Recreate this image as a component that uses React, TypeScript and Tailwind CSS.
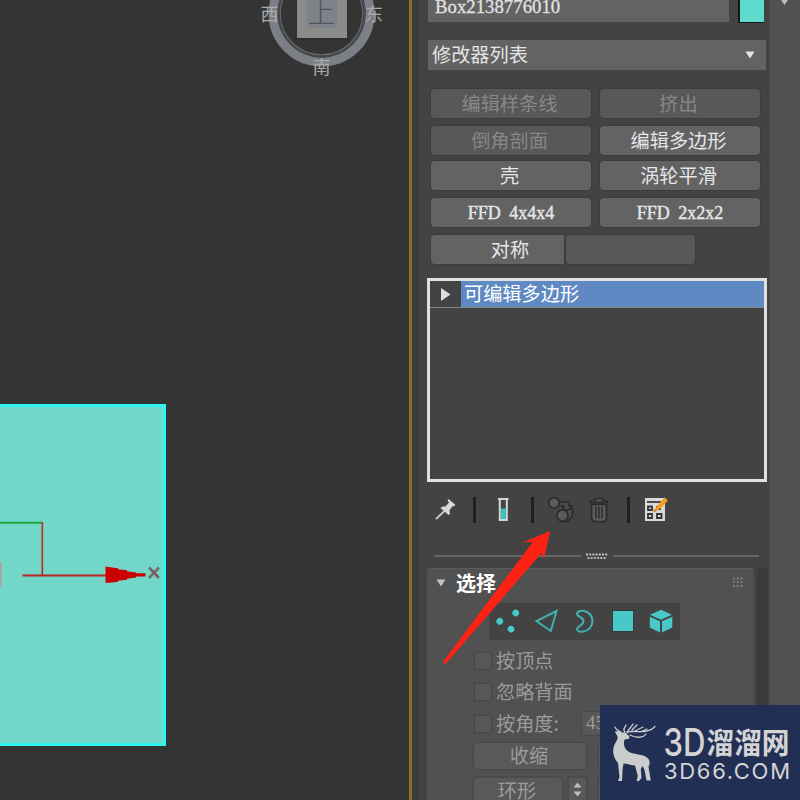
import React from "react";

const cjk = "font-['Noto_Sans_CJK_SC',sans-serif]";

function Viewport() {
  return (
    <section className="relative h-full w-[409px] shrink-0 overflow-hidden bg-[#343434]">
      <svg className="absolute left-[250px] top-0" width="140" height="86" viewBox="250 0 140 86">
        <circle cx="321.5" cy="13.5" r="48.5" fill="none" stroke="#7c8086" strokeWidth="9" />
        <circle cx="321.5" cy="13.5" r="43.2" fill="none" stroke="#46494d" strokeWidth="2" />
        <circle cx="321.5" cy="13.5" r="41.3" fill="none" stroke="#686b6e" strokeWidth="1.2" />
        <rect x="295" y="-12" width="54" height="52" fill="#2f2f2f" opacity="0.6" />
        <rect x="297" y="-12" width="50" height="50" fill="#8b8b8a" />
        <rect x="307" y="-5" width="30" height="33" fill="#7e8289" />
        <g className={cjk} textAnchor="middle">
          <text x="321.5" y="23" fontSize="28" fontWeight="300" fill="#50545b">上</text>
          <g fontSize="18" fontWeight="400" fill="#a9abad">
            <text x="269.5" y="21">西</text>
            <text x="374" y="21">东</text>
            <text x="321.5" y="74">南</text>
          </g>
        </g>
      </svg>
      <div className="absolute -left-3 top-[404px] h-[342px] w-[178px] border-[3px] border-[#2df5f3] bg-[#72d7c9]" />
      <svg className="absolute left-0 top-[510px]" width="170" height="86" viewBox="0 510 170 86">
        <rect x="0" y="562" width="1.5" height="25" fill="#b39c9c" />
        <path d="M0 522.8H42" stroke="#20a83a" strokeWidth="2" />
        <path d="M42.3 522V575" stroke="#bd3030" strokeWidth="1.7" />
        <path d="M22.500 575.500H108" stroke="#b72525" strokeWidth="2" />
        <path d="M105.500 566.500L110 567.200L118 568.200V569.300L127 570.300V571.300L136 572.500V573.300H145.500V576.500H136V577.500L127 578.700V579.700L118 580.700V581.700L110 582.800H105.500Z" fill="#cb0000" />
        <path d="M149 567.500L159 578M159 567.500L149 578" stroke="#756f69" strokeWidth="2.600" />
        <path d="M150 568L158 577" stroke="#91423e" strokeWidth="1" />
      </svg>
    </section>
  );
}

function ModButton({ label, disabled = false, latin = false }: { label: string; disabled?: boolean; latin?: boolean }) {
  return (
    <button
      className={`flex h-[29px] w-[160px] items-center justify-center rounded-[4px] shadow-[0_0_0_1px_#3c3c3c] ${
        disabled ? "bg-[#585858] text-[#878787]" : "bg-[#636363] text-[#e6e6e6]"
      }`}
    >
      <span
        className={
          latin
            ? "font-['Liberation_Serif',serif] text-[18px] leading-none [-webkit-text-stroke:0.4px_#e6e6e6] [word-spacing:4px]"
            : "-ml-[3px] text-[19.200px] leading-none"
        }
      >
        {label}
      </span>
    </button>
  );
}

function Separator() {
  return <div className="h-[26px] w-[3px] bg-[#1f1f1f]" />;
}

function StackToolbar() {
  return (
    <div className="mt-[14px] flex h-[28px] items-center pl-[7px]">
      <svg width="24" height="26" viewBox="434 497 24 26">
        <path d="M436.500 518.500L445 510.500" stroke="#c4c4c4" strokeWidth="2" strokeLinecap="round" />
        <path d="M448.500 499L455.500 505L453.500 506.500L452.500 506L449.500 510.500L450 513.500L448.500 515L440.500 508L442.500 506.500L445.500 506.500L449 502.500L447.500 500.500Z" fill="#dadada" />
      </svg>
      <div className="ml-[15px]"><Separator /></div>
      <svg className="ml-[20px]" width="14" height="26" viewBox="496 497 14 26">
        <path d="M498 499H508.500M499.800 499V520H506.800V499" fill="none" stroke="#d6d6d6" strokeWidth="2" />
        <rect x="500.800" y="508.500" width="5" height="10.500" fill="#39c2c2" />
      </svg>
      <div className="ml-[21px]"><Separator /></div>
      <svg className="ml-[13px]" width="28" height="28" viewBox="547 496 28 28">
        <circle cx="554" cy="502.800" r="5.200" fill="#5b5b5b" stroke="#2b2b2b" strokeWidth="1.700" />
        <path d="M560 502H568.500V506H572L567 512L562 506H565" fill="#4e4e4e" stroke="#2b2b2b" strokeWidth="1.600" />
        <path d="M566 510.500L572.500 508.500V516L567.500 521.500H560" fill="#4e4e4e" stroke="#2b2b2b" strokeWidth="1.600" />
        <circle cx="562.500" cy="515.500" r="5.600" fill="#5b5b5b" stroke="#2b2b2b" strokeWidth="1.700" />
      </svg>
      <svg className="ml-[14px]" width="20" height="26" viewBox="589 497 20 26">
        <path d="M590 502.500H608L606 500.500H602.500V498.500H595.500V500.500H592Z" fill="#535353" stroke="#2b2b2b" strokeWidth="1.500" />
        <path d="M591.500 504.500H606.500V519L604.500 521.500H593.500L591.500 519Z" fill="#5b5b5b" stroke="#2b2b2b" strokeWidth="1.700" />
        <path d="M596 506.500V518.500M599 506.500V518.500M602 506.500V518.500" stroke="#2b2b2b" strokeWidth="1.400" />
      </svg>
      <div className="ml-[18px]"><Separator /></div>
      <svg className="ml-[14px]" width="25" height="26" viewBox="644 497 25 26">
        <path d="M645 498H665V521H645Z" fill="#d9d9d9" />
        <path d="M647 502H661" stroke="#3e3e3e" strokeWidth="1.800" />
        <path d="M648 506.500H652V510H648ZM648 514H652V518H648ZM657 514H661.500V518H657Z" fill="#d9d9d9" stroke="#333" strokeWidth="1.800" />
        <path d="M656 506H661V510H656Z" fill="#333" />
        <path d="M654 511.500L656.500 506.500L664.500 497.500L668 500.500L660 509Z" fill="#f1a21d" />
        <path d="M653 512.500L654.500 509L657 511Z" fill="#d58608" />
      </svg>
    </div>
  );
}

function Divider() {
  return (
    <div className="mt-[27px] flex h-[10px] items-center pl-[7px]">
      <div className="h-[2px] w-[147px] bg-[#666]" />
      <svg className="ml-[4px]" width="24" height="10" viewBox="585 551 24 10">
        <path d="M586 554.500H608" stroke="#c4c4c4" strokeWidth="2" strokeDasharray="2 1.200" />
        <path d="M587.500 558H607" stroke="#b4b4b4" strokeWidth="2" strokeDasharray="2 1.200" />
      </svg>
      <div className="ml-[4px] h-[2px] w-[146px] bg-[#666]" />
    </div>
  );
}

function SubObjectBar() {
  return (
    <svg className="ml-[62px] mt-[5px] block bg-[#434343]" width="191" height="37" viewBox="489 603 191 37">
      <g fill="#49c8c8" stroke="#353b3b" strokeWidth="1">
        <path d="M498.500 617.300H501L503.700 620V622.500L501 625.200H498.500L495.800 622.500V620Z" />
        <path d="M514.500 609H517L519.700 611.700V614.200L517 616.900H514.500L511.800 614.200V611.700Z" />
        <path d="M509.800 625.200H512.300L515 627.900V630.400L512.300 633.100H509.800L507.100 630.400V627.900Z" />
        <rect x="612.500" y="610.500" width="21" height="21" />
      </g>
      <path d="M536.500 621.200L556.500 611L550.800 631Z" fill="none" stroke="#43b1b1" strokeWidth="2" />
      <path d="M577 613.500C578 610.500 581 610.500 584 611C589 612 592.500 616 592.500 621C592.500 626.500 588.500 631 583 631.500C580 632 577 631.500 577 629C577 625.500 583.500 626 583.500 621C583.500 616.500 577 617.500 577 613.500Z" fill="none" stroke="#43b1b1" strokeWidth="2" />
      <g fill="#49c8c8">
        <path d="M661 609.800L672 614.700L661 619.800L650 614.700Z" />
        <path d="M649.800 616.700L660 621.200V632.500L649.800 627.500Z" />
        <path d="M672.300 616.700L662 621.200V632.500L672.300 627.500Z" />
      </g>
    </svg>
  );
}

function CheckRow({ label }: { label: string }) {
  return (
    <div className="flex h-[20px] items-center">
      <div className="h-[18px] w-[18px] border border-[#474747] bg-[#575757]" />
      <span className="ml-[4px] text-[19.200px] leading-none text-[#9b9b9b]">{label}</span>
    </div>
  );
}

function SelectionRollout() {
  return (
    <div className="h-[232px] w-[327px] overflow-hidden rounded-t-[4px] border-t border-[#5b5b5b] bg-[#515151]">
      <div className="flex h-[29px] items-center pb-[2px] pl-[9px]">
        <svg width="10" height="8" viewBox="0 0 10 8"><path d="M0.500 0.500H9.500L5 7.500Z" fill="#c2c2c2" /></svg>
        <span className="ml-[10px] text-[20px] font-bold leading-none text-white">选择</span>
        <svg className="ml-[236px]" width="11" height="11" viewBox="0 0 11 11">
          <path d="M1 1.500H11M1 5.200H11M1 9H11" stroke="#858585" strokeWidth="1.800" strokeDasharray="1.800 2" />
        </svg>
      </div>
      <SubObjectBar />
      <div className="ml-[47px] mt-[11px]">
        <CheckRow label="按顶点" />
        <div className="mt-[11px]"><CheckRow label="忽略背面" /></div>
        <div className="mt-[9px] flex items-center">
          <CheckRow label="按角度:" />
          <div className="ml-[22px] flex h-[25px] w-[90px] items-center border border-[#474747] bg-[#575757] pl-[4px] font-['Liberation_Serif',serif] text-[19px] text-[#9b9b9b]">45.0</div>
        </div>
        <div className="mt-[7px] flex gap-[13px]">
          <div className="flex h-[26px] w-[112px] items-center justify-center rounded-[4px] bg-[#595959] pr-[2px] text-[19.200px] leading-none text-[#9b9b9b] shadow-[0_0_0_1.500px_#494949]">收缩</div>
          <div className="h-[26px] w-[112px] rounded-[4px] bg-[#595959] shadow-[0_0_0_1.500px_#494949]" />
        </div>
        <div className="mt-[9px] flex">
          <div className="flex h-[26px] w-[88px] items-center justify-center rounded-[4px] bg-[#595959] pr-[2px] text-[19.200px] leading-none text-[#9b9b9b] shadow-[0_0_0_1.500px_#494949]">环形</div>
          <svg className="ml-[7px] bg-[#595959] shadow-[0_0_0_1.500px_#494949]" width="17" height="26" viewBox="0 0 17 26">
            <path d="M4.500 9.500H12.500L8.500 4.500ZM4.500 13.500H12.500L8.500 18.500Z" fill="#bdbdbd" />
          </svg>
          <div className="ml-[13px] h-[26px] w-[88px] bg-[#595959] shadow-[0_0_0_1.500px_#494949]" />
        </div>
      </div>
    </div>
  );
}

function CommandPanel() {
  return (
    <aside className="h-full w-[357px] shrink-0 border-l-[7px] border-[#3c3c3c] bg-[#434343] pl-[9px]">
      <div className="flex h-[23px] gap-[9px]">
        <div className="flex h-[22px] w-[301px] items-start bg-[#636363] pl-[7px] font-['Liberation_Serif',serif] text-[18.800px] leading-[14px] text-[#e1e1e1] [-webkit-text-stroke:0.300px_#e1e1e1]">Box2138776010</div>
        <div className="h-[23px] w-[26px] border-b border-l-2 border-[#151515] bg-[#5ddccb]" />
      </div>
      <div className="mt-[17px] flex h-[30px] w-[338px] items-center justify-between bg-[#636363] pl-[4px] pr-[11px] text-[#e4e4e4]">
        <span className="text-[19.200px] leading-none">修改器列表</span>
        <svg width="10" height="8" viewBox="0 0 10 8"><path d="M0.500 0.500H9.500L5 7.500Z" fill="#e6e6e6" /></svg>
      </div>
      <div className="ml-[3px] mt-[19px] flex flex-col">
        <div className="flex gap-[9px]"><ModButton label="编辑样条线" disabled /><ModButton label="挤出" disabled /></div>
        <div className="mt-[8px] flex gap-[9px]"><ModButton label="倒角剖面" disabled /><ModButton label="编辑多边形" /></div>
        <div className="mt-[6px] flex gap-[9px]"><ModButton label="壳" /><ModButton label="涡轮平滑" /></div>
        <div className="mt-[8px] flex gap-[9px]"><ModButton label="FFD 4x4x4" latin /><ModButton label="FFD 2x2x2" latin /></div>
        <div className="mt-[8px] flex gap-[2px]">
          <div className="flex h-[29px] w-[133px] items-center justify-center rounded-l-[4px] bg-[#636363] pl-[25px] text-[19.200px] leading-none text-[#e6e6e6] shadow-[0_0_0_1px_#3c3c3c]">对称</div>
          <div className="h-[29px] w-[129px] rounded-[4px] bg-[#585858] shadow-[0_0_0_1px_#3c3c3c]" />
        </div>
      </div>
      <div className="-ml-px">
        <div className="mt-[14px] h-[204px] w-[340px] border-[3px] border-[#dfe1e5] bg-[#434343]">
          <div className="flex h-[27px] border-b border-[#858585]">
            <div className="flex w-[31px] items-center pl-[11px]">
              <svg width="10" height="13" viewBox="0 0 10 13"><path d="M0 0L9.500 6.500L0 13Z" fill="#dedede" /></svg>
            </div>
            <div className="flex flex-1 items-center bg-[#5e89c2] pl-[3px] text-[19.200px] leading-none text-white">可编辑多边形</div>
          </div>
        </div>
        <StackToolbar />
        <Divider />
        <div className="mt-[7px] flex gap-[3px]">
          <SelectionRollout />
          <div className="h-[232px] w-[11px] rounded-t-[3px] bg-[#3b3b3b]" />
        </div>
      </div>
    </aside>
  );
}

function Watermark() {
  return (
    <div className="absolute bottom-0 right-0 h-[95px] w-[200px] bg-[#222f54]">
      <svg width="200" height="95" viewBox="600 705 200 95">
        <path d="M614.800 731.500L619.500 731L622 733L624.500 732L629.500 736.500L629 738.800L624.500 739.500C623 745 624.500 750 630 752.500C636 755 644 753.500 648.500 759C650.500 762 649.500 764.500 648.500 767L650.800 780.500H646.500L644.500 770L642.500 766L640.800 769L641.500 778L639 781H636.500L637.800 776L635 765.500C631.500 765.500 627 763.500 623.500 763.500L622.500 770L622 781H618L619.500 777L618 763C613.500 758 612 751.500 614 746C616 741 619 738.500 617 735.500Z" fill="#cbcccc" />
        <path d="M622 733C617 730 615 728 615 727M625 732C622 729 625 728 626 725M627 733C628 729 631 728 633 724M627 732C633 730 647 735 655 726.500M630 735C638 739 644 737 646 734M632 730L637 725M635 731L643 727M640 732L647 729" fill="none" stroke="#cbcccc" strokeWidth="1.300" strokeLinecap="round" />
        <g fill="#d4d4d4" className="font-['Noto_Sans_CJK_SC',sans-serif]">
          <text x="663.500" y="756" fontFamily="Inter, sans-serif" fontSize="37.500" fontWeight="500" textLength="42" lengthAdjust="spacingAndGlyphs">3D</text>
          <text x="706.500" y="753.500" fontSize="29" fontWeight="700" textLength="83" lengthAdjust="spacingAndGlyphs">溜溜网</text>
          <text x="664" y="778.500" fontFamily="Inter, sans-serif" fontSize="22" fontWeight="400" textLength="126" lengthAdjust="spacing">3D66.COM</text>
        </g>
      </svg>
    </div>
  );
}

export default function App() {
  return (
    <main className={`relative flex h-[800px] w-[800px] overflow-hidden bg-[#434343] ${cjk}`}>
      <Viewport />
      <div className="h-full w-[3px] shrink-0 bg-[#8a7020]" />
      <CommandPanel />
      <div className="flex h-full flex-1 justify-center border-l border-[#484848] bg-[#515151]">
        <svg width="12" height="8" viewBox="0 0 12 8"><path d="M1.500 -1H9.500L5.500 5Z" fill="#c0c0c0" /></svg>
      </div>
      <svg className="absolute left-[440px] top-[528px]" width="114" height="140" viewBox="440 528 114 140">
        <path d="M550.300 531L544 559L541.500 553L446 663.500Q443.500 665 443.300 661.500L533 541.800L522.500 542.500Z" fill="#ff2114" />
      </svg>
      <Watermark />
    </main>
  );
}
